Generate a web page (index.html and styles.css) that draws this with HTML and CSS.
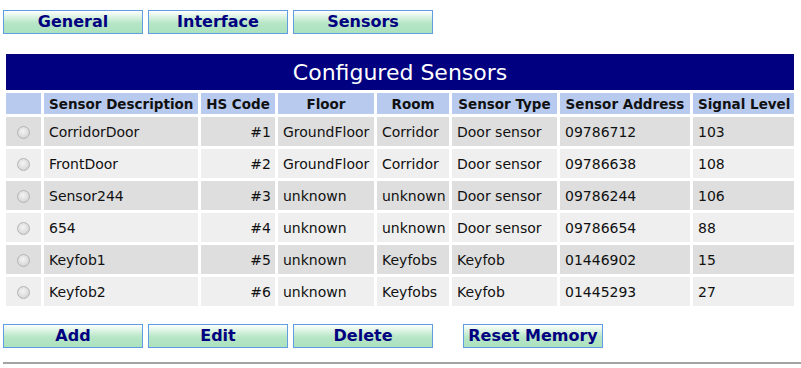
FILE: index.html
```html
<!DOCTYPE html>
<html lang="en">
<head>
    <meta charset="UTF-8" />
    <title>Configured Sensors</title>
    <link rel="stylesheet" href="styles.css">
</head>

<body>
    <div class="tabs">
        <button class="btn">General</button>
        <button class="btn">Interface</button>
        <button class="btn">Sensors</button>
    </div>

    <table class="sensors">
        <colgroup>
            <col style="width: 35px">
            <col style="width: 154px">
            <col style="width: 74px">
            <col style="width: 96px">
            <col style="width: 72px">
            <col style="width: 105px">
            <col style="width: 130px">
            <col style="width: 101px">
        </colgroup>
        <tr>
            <td class="title" colspan="8">Configured Sensors</td>
        </tr>
        <tr class="head">
            <th></th>
            <th>Sensor Description</th>
            <th>HS Code</th>
            <th>Floor</th>
            <th>Room</th>
            <th>Sensor Type</th>
            <th>Sensor Address</th>
            <th>Signal Level</th>
        </tr>
        <tr class="odd">
            <td class="sel"><input type="radio" name="sensor" /></td>
            <td>CorridorDoor</td>
            <td class="num">#1</td>
            <td>GroundFloor</td>
            <td>Corridor</td>
            <td>Door sensor</td>
            <td>09786712</td>
            <td>103</td>
        </tr>
        <tr class="even">
            <td class="sel"><input type="radio" name="sensor" /></td>
            <td>FrontDoor</td>
            <td class="num">#2</td>
            <td>GroundFloor</td>
            <td>Corridor</td>
            <td>Door sensor</td>
            <td>09786638</td>
            <td>108</td>
        </tr>
        <tr class="odd">
            <td class="sel"><input type="radio" name="sensor" /></td>
            <td>Sensor244</td>
            <td class="num">#3</td>
            <td>unknown</td>
            <td>unknown</td>
            <td>Door sensor</td>
            <td>09786244</td>
            <td>106</td>
        </tr>
        <tr class="even">
            <td class="sel"><input type="radio" name="sensor" /></td>
            <td>654</td>
            <td class="num">#4</td>
            <td>unknown</td>
            <td>unknown</td>
            <td>Door sensor</td>
            <td>09786654</td>
            <td>88</td>
        </tr>
        <tr class="odd">
            <td class="sel"><input type="radio" name="sensor" /></td>
            <td>Keyfob1</td>
            <td class="num">#5</td>
            <td>unknown</td>
            <td>Keyfobs</td>
            <td>Keyfob</td>
            <td>01446902</td>
            <td>15</td>
        </tr>
        <tr class="even">
            <td class="sel"><input type="radio" name="sensor" /></td>
            <td>Keyfob2</td>
            <td class="num">#6</td>
            <td>unknown</td>
            <td>Keyfobs</td>
            <td>Keyfob</td>
            <td>01445293</td>
            <td>27</td>
        </tr>
    </table>

    <div class="actions">
        <button class="btn">Add</button>
        <button class="btn">Edit</button>
        <button class="btn">Delete</button>
        <button class="btn reset">Reset Memory</button>
    </div>

    <hr class="rule" />
</body>
</html>
```

FILE: styles.css
```css
body {
    margin: 0;
    padding: 10px 3px 0 3px;
    font-family: "DejaVu Sans", Verdana, sans-serif;
    color: #111;
    background: #ffffff;
    overflow: hidden;
}

.tabs,
.actions {
    display: flex;
    gap: 5px;
}

.btn {
    width: 140px;
    height: 24px;
    padding: 0;
    border: 1px solid #5f9de0;
    background: linear-gradient(#ffffff 0%, #e6f7eb 18%, #b6e6c6 55%, #abe2be 100%);
    color: #000080;
    font-family: "DejaVu Sans", Verdana, sans-serif;
    font-weight: bold;
    font-size: 16px;
    line-height: 22px;
    cursor: pointer;
}

    .btn.reset {
        margin-left: 25px;
    }

.sensors {
    margin-top: 17px;
    border-spacing: 3px;
    table-layout: fixed;
    width: 794px;
    font-size: 14px;
}

    .sensors td,
    .sensors th {
        padding: 0 5px;
        white-space: nowrap;
        overflow: hidden;
    }

.title {
    height: 36px;
    background: #000080;
    color: #ffffff;
    text-align: center;
    font-size: 22px;
}

.head th {
    height: 21px;
    background: #b8cbef;
    font-size: 13.5px;
    font-weight: bold;
    text-align: center;
    color: #111;
}

.odd td,
.even td {
    height: 29px;
}

.odd td {
    background: #dedede;
}

.even td {
    background: #efefef;
}

.sensors td.num {
    text-align: right;
    padding-right: 4px;
}

.sensors td.sel {
    text-align: center;
    padding: 0;
}

.sel input {
    appearance: none;
    -webkit-appearance: none;
    width: 13px;
    height: 13px;
    margin: 0;
    vertical-align: middle;
    border: 1px solid #b4b4b4;
    border-radius: 50%;
    background: radial-gradient(circle at 45% 40%, #f4f4f4 0%, #dedede 55%, #c8c8c8 100%);
}

.actions {
    margin-top: 15px;
}

.rule {
    margin: 14px -3px 0 0;
    border: none;
    border-top: 2px solid #a3a3a3;
    height: 0;
}
```
